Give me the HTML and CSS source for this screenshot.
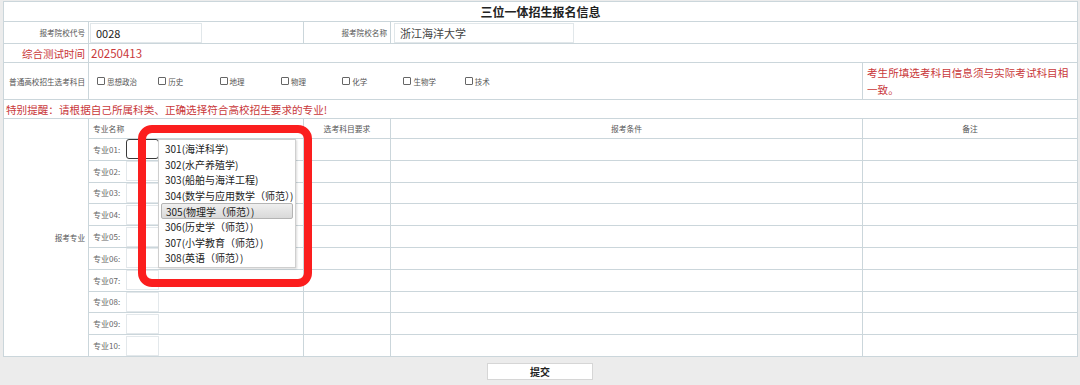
FILE: index.html
```html
<!DOCTYPE html>
<html>
<head>
  <meta charset="utf-8">
  <title>三位一体招生报名信息</title>
  <link rel="stylesheet" href="styles.css">
</head>
<body>
  <div class="page">
    <table class="form">
      <colgroup>
        <col style="width:85px">
        <col style="width:215px">
        <col style="width:87px">
        <col style="width:472px">
        <col style="width:215px">
      </colgroup>
      <tr class="r-title">
        <td colspan="5" class="title">三位一体招生报名信息</td>
      </tr>
      <tr class="r-school">
        <td class="lbl">报考院校代号</td>
        <td class="val"><input class="field code" value="0028"></td>
        <td class="lbl">报考院校名称</td>
        <td colspan="2" class="val"><input class="field name" value="浙江海洋大学"></td>
      </tr>
      <tr class="r-date">
        <td class="lbl red big">综合测试时间</td>
        <td colspan="4" class="val red date">20250413</td>
      </tr>
      <tr class="r-subjects">
        <td class="lbl">普通高校招生选考科目</td>
        <td colspan="3" class="val">
          <div class="checks">
            <label class="check"><span class="box"></span>思想政治</label>
            <label class="check"><span class="box"></span>历史</label>
            <label class="check"><span class="box"></span>地理</label>
            <label class="check"><span class="box"></span>物理</label>
            <label class="check"><span class="box"></span>化学</label>
            <label class="check"><span class="box"></span>生物学</label>
            <label class="check"><span class="box"></span>技术</label>
          </div>
        </td>
        <td class="note red">考生所填选考科目信息须与实际考试科目相一致。</td>
      </tr>
      <tr class="r-notice">
        <td colspan="5" class="notice red">特别提醒：请根据自己所属科类、正确选择符合高校招生要求的专业!</td>
      </tr>
      <tr class="r-head">
        <td rowspan="11" class="lbl">报考专业</td>
        <td class="head left">专业名称</td>
        <td class="head">选考科目要求</td>
        <td class="head">报考条件</td>
        <td class="head">备注</td>
      </tr>
      <tr class="r-major"><td class="major"><span class="mlbl">专业01:</span><select class="pick open"></select></td><td></td><td></td><td></td></tr>
      <tr class="r-major"><td class="major"><span class="mlbl">专业02:</span><select class="pick"></select></td><td></td><td></td><td></td></tr>
      <tr class="r-major"><td class="major"><span class="mlbl">专业03:</span><select class="pick"></select></td><td></td><td></td><td></td></tr>
      <tr class="r-major"><td class="major"><span class="mlbl">专业04:</span><select class="pick"></select></td><td></td><td></td><td></td></tr>
      <tr class="r-major"><td class="major"><span class="mlbl">专业05:</span><select class="pick"></select></td><td></td><td></td><td></td></tr>
      <tr class="r-major"><td class="major"><span class="mlbl">专业06:</span><select class="pick"></select></td><td></td><td></td><td></td></tr>
      <tr class="r-major"><td class="major"><span class="mlbl">专业07:</span><select class="pick"></select></td><td></td><td></td><td></td></tr>
      <tr class="r-major"><td class="major"><span class="mlbl">专业08:</span><select class="pick"></select></td><td></td><td></td><td></td></tr>
      <tr class="r-major"><td class="major"><span class="mlbl">专业09:</span><select class="pick"></select></td><td></td><td></td><td></td></tr>
      <tr class="r-major"><td class="major"><span class="mlbl">专业10:</span><select class="pick"></select></td><td></td><td></td><td></td></tr>
    </table>

    <div class="actions">
      <button class="submit">提交</button>
    </div>

    <ul class="options">
      <li>301(海洋科学)</li>
      <li>302(水产养殖学)</li>
      <li>303(船舶与海洋工程)</li>
      <li>304(数学与应用数学（师范）)</li>
      <li class="hover">305(物理学（师范）)</li>
      <li>306(历史学（师范）)</li>
      <li>307(小学教育（师范）)</li>
      <li>308(英语（师范）)</li>
    </ul>

    <div class="mark"></div>
  </div>
</body>
</html>
```

FILE: styles.css
```css
body {
  margin: 0;
  background-color: #ececec;
  font-family: "Noto Sans CJK SC", "Noto Sans", sans-serif;
  color: #333;
}

.page {
  position: relative;
  padding: 1px 3px 0;
}

.form {
  width: 1074px;
  table-layout: fixed;
  border-collapse: collapse;
  background-color: #fff;
  border: 1px solid #c3d0d6;
}

.form td {
  border: 1px solid #cbd6db;
  padding: 0;
  font-size: 8px;
  color: #555;
  vertical-align: middle;
}

.r-title td { height: 19px; }
.r-school td { height: 21px; }
.r-date td { height: 18px; }
.r-subjects td { height: 36px; }
.r-notice td { height: 18px; }
.r-head td { height: 19px; }
.r-major td { height: 20.8px; }

.title {
  text-align: center;
  font-size: 12px !important;
  font-weight: bold;
  color: #222 !important;
}

.lbl {
  text-align: right;
  padding-right: 3px !important;
  font-size: 7.6px !important;
}

.val {
  padding-left: 1px !important;
}

.red {
  color: #c9383a !important;
}

.big {
  font-size: 10.5px !important;
}

.date {
  font-size: 11.5px !important;
  padding-left: 2px !important;
}

.field {
  box-sizing: border-box;
  height: 20px;
  border: 1px solid #e1e7ea;
  padding: 0 0 0 5px;
  font-family: "Noto Sans CJK SC", "Noto Sans", sans-serif;
  font-size: 11px;
  color: #222;
  outline: none;
  vertical-align: middle;
}

.code {
  width: 112px;
}

.name {
  width: 180px;
  margin-left: 2px;
  color: #444;
}

.checks {
  display: flex;
  padding-left: 7px;
}

.check {
  display: flex;
  align-items: center;
  width: 61.3px;
  font-size: 7.5px;
  color: #555;
}

.box {
  width: 6px;
  height: 6px;
  border: 1px solid #666;
  border-radius: 1px;
  margin-right: 2px;
}

.note {
  padding: 0 6px 0 4px !important;
  font-size: 10.6px !important;
  line-height: 17px;
}

.notice {
  padding-left: 2px !important;
  font-size: 10.6px !important;
}

.head {
  text-align: center;
  font-size: 7.8px !important;
}

.head.left {
  text-align: left;
  padding-left: 4px !important;
}

.major {
  padding-left: 4px !important;
  font-size: 8px !important;
  color: #666 !important;
}

.mlbl {
  display: inline-block;
  width: 33px;
  vertical-align: middle;
}

.pick {
  appearance: none;
  -webkit-appearance: none;
  box-sizing: border-box;
  width: 33px;
  height: 20px;
  margin: 0;
  border: 1px solid #e3e8eb;
  border-radius: 0;
  background-color: #fff;
  vertical-align: middle;
}

.pick.open {
  border: 1px solid #3a3a3a;
  border-radius: 3px;
}

.actions {
  display: flex;
  justify-content: center;
  padding-top: 6px;
}

.submit {
  width: 106px;
  height: 17px;
  padding: 0;
  background-color: #fff;
  border: 1px solid #d6d6d6;
  font-family: "Noto Sans CJK SC", sans-serif;
  font-size: 10px;
  font-weight: bold;
  color: #222;
}

.options {
  position: absolute;
  left: 158px;
  top: 139px;
  width: 138px;
  height: 129px;
  box-sizing: border-box;
  margin: 0;
  padding: 1px 1px 0;
  list-style: none;
  background-color: #fff;
  border: 1px solid #cfcfcf;
  box-shadow: 1px 1px 2px rgba(0, 0, 0, 0.15);
}

.options li {
  height: 15.6px;
  line-height: 15.6px;
  padding-left: 5px;
  font-size: 10px;
  color: #222;
  white-space: nowrap;
}

.options li.hover {
  box-sizing: border-box;
  margin: 0 1px;
  padding-left: 4px;
  background: linear-gradient(#efefef, #d9d9d9);
  border: 1px solid #b4b4b4;
  border-radius: 2px;
}

.mark {
  position: absolute;
  left: 138px;
  top: 125px;
  width: 174px;
  height: 162px;
  box-sizing: border-box;
  border: 8px solid #fb1e1e;
  border-radius: 14px;
}
```
